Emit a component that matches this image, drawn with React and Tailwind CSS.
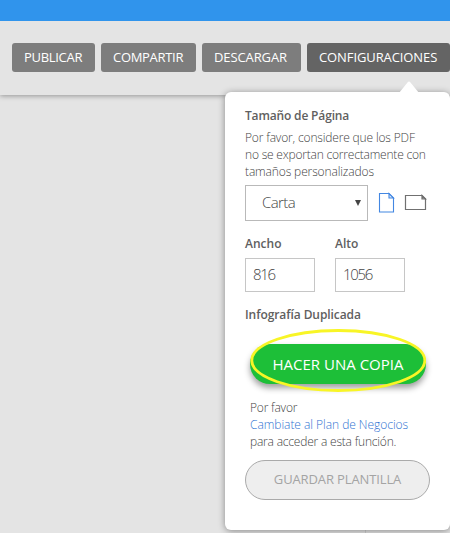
const navButtons = [
  { label: 'PUBLICAR', box: 'w-[83px] bg-[#7d7d7d]', text: 'tracking-[-0.3px]' },
  { label: 'COMPARTIR', box: 'w-[95px] bg-[#7d7d7d]', text: 'tracking-[-0.3px]' },
  { label: 'DESCARGAR', box: 'w-[99px] bg-[#7d7d7d]', text: 'tracking-[-0.1px]' },
  { label: 'CONFIGURACIONES', box: 'w-[143px] bg-[#646464]', text: 'tracking-[-0.1px]' },
];

function NavButton({ label, box, text }) {
  return (
    <button className={`flex h-[29px] shrink-0 items-center justify-start rounded-[3px] pl-3 text-[13px] whitespace-nowrap text-white ${box}`}>
      <span className={text}>{label}</span>
    </button>
  );
}

function SizeField({ label, value }) {
  return (
    <label className="flex w-[70px] flex-col">
      <span className="h-[14px] text-[12px] leading-[14px] font-semibold text-[#606060]">{label}</span>
      <span className="mt-[7px] flex h-[34px] items-center border border-[#c6c6c6] pb-[2px] pl-[7px] text-[15px] tracking-[-1.3px]">{value}</span>
    </label>
  );
}

function SettingsPanel() {
  return (
    <section className="absolute top-[92px] left-[225px] flex h-[438px] w-[225px] flex-col rounded-[6px] bg-white pl-5 text-[#444] shadow-[0_1px_7px_rgba(0,0,0,0.4)]">
      <svg className="absolute -top-[11px] left-[174px]" width="20" height="12" viewBox="0 0 20 12" fill="#fff">
        <path d="M0 12 8.500 1.500Q10-.5 11.500 1.500L20 12Z" />
      </svg>
      <h2 className="mt-4 h-[16px] text-[12px] leading-[16px] font-semibold tracking-[-0.16px] whitespace-nowrap text-[#606060]">Tamaño de Página</h2>
      <p className="mt-[5px] text-[12px] leading-[17px] font-light whitespace-nowrap">
        <span className="block tracking-[-0.16px]">Por favor, considere que los PDF</span>
        <span className="block tracking-[-0.2px]">no se exportan correctamente con</span>
        <span className="block tracking-[-0.13px]">tamaños personalizados</span>
      </p>
      <div className="mt-[5px] flex h-9 items-center">
        <div className="flex h-9 w-[123px] items-center justify-between border border-[#b9b9b9] pr-[6px] pl-4 text-[15px] font-light">
          <span className="-mt-px tracking-[-0.6px]">Carta</span>
          <svg width="6" height="6" viewBox="0 0 6 6" fill="#444"><path d="M0 0h6L3 6Z" /></svg>
        </div>
        <svg className="-mt-[2px] ml-[10px]" width="17" height="21" viewBox="0 0 17 21" fill="none" stroke="#4387e2" strokeWidth="1.1">
          <path d="M1.500 1.500h9.500l4.500 4.500v14h-14Z" />
          <path d="M11 1.500v4.500h4.500Z" fill="#dce9fa" />
        </svg>
        <svg className="-mt-[2px] ml-[9px]" width="23" height="17" viewBox="0 0 23 17" fill="none" stroke="#707070" strokeWidth="1.200">
          <path d="M1.500 1.500h16.500l3.500 3.500v10.500h-20Z" />
          <path d="M18 1.500v3.500h3.500Z" fill="#aaa" />
        </svg>
      </div>
      <div className="mt-4 flex gap-5 font-light">
        <SizeField label="Ancho" value="816" />
        <SizeField label="Alto" value="1056" />
      </div>
      <h2 className="mt-[15px] h-[16px] text-[12px] leading-[16px] font-semibold tracking-[-0.08px] whitespace-nowrap text-[#606060]">Infografía Duplicada</h2>
      <div className="relative mt-[21px] ml-[5px] h-10 w-[176px]">
        <button className="h-10 w-[176px] rounded-full bg-[#1dbf38] text-[15px] whitespace-nowrap text-white shadow-[0_4px_6px_rgba(0,0,0,0.38)]">
          <span>HACER UNA COPIA</span>
        </button>
        <svg className="absolute -top-[15px] left-0" width="176" height="63" viewBox="0 0 176 63" fill="none">
          <ellipse cx="88.300" cy="31.500" rx="86.500" ry="30" stroke="#f8f526" strokeWidth="2.800" />
        </svg>
      </div>
      <p className="mt-[15px] ml-[5px] text-[12px] leading-[17px] font-light whitespace-nowrap">
        <span className="block tracking-[-0.2px]">Por favor</span>
        <a className="block tracking-[-0.04px] text-[#2f73d2]">Cambiate al Plan de Negocios</a>
        <span className="block tracking-[-0.2px]">para acceder a esta función.</span>
      </p>
      <button className="mt-[10px] h-10 w-[185px] rounded-full border border-[#aaa] bg-[#eee] text-[13px] whitespace-nowrap text-[#a4a4a4]">
        <span className="tracking-[-0.12px]">GUARDAR PLANTILLA</span>
      </button>
    </section>
  );
}

export default function App() {
  return (
    <main className="relative flex h-[533px] w-[450px] flex-col overflow-hidden bg-[#e4e4e4] font-['Open_Sans','Noto_Sans',sans-serif]">
      <div className="relative z-10 h-[21px] shrink-0 bg-[#3094ec]" />
      <nav className="flex h-[74px] shrink-0 gap-[6px] bg-[#e4e4e4] pt-[22px] pl-3 shadow-[0_1px_5px_rgba(0,0,0,0.35)]">
        {navButtons.map((b) => <NavButton key={b.label} {...b} />)}
      </nav>
      <div className="w-[366px] flex-1 border-r border-[#cfcfcf]" />
      <SettingsPanel />
    </main>
  );
}
